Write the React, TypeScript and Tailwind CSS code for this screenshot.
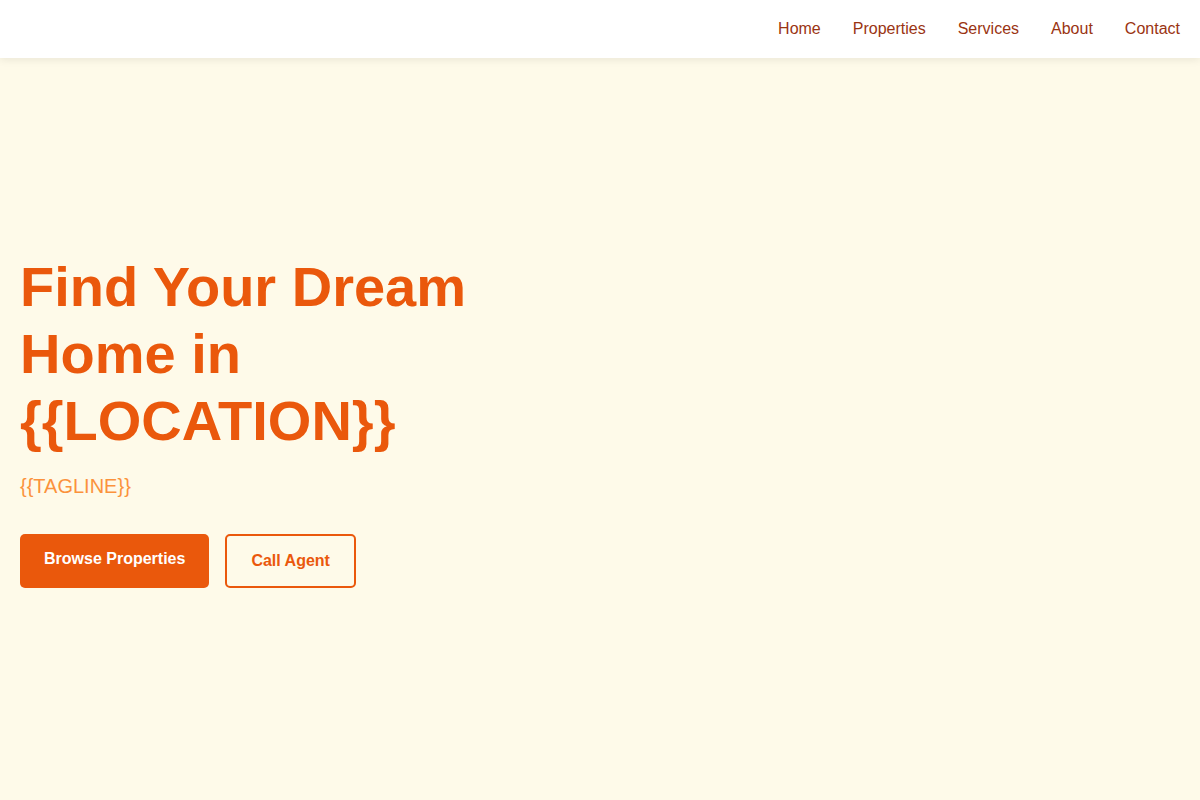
const NAV = ['Home', 'Properties', 'Services', 'About', 'Contact'];

export default function App() {
  return (
    <div className="min-h-screen flex flex-col bg-[#fefae9] font-['Liberation_Sans',Arial,sans-serif]">
      {/* Header */}
      <header className="h-[58px] bg-white flex items-center justify-end px-5 shadow-[0_2px_8px_rgba(0,0,0,0.08)] relative z-10">
        <nav className="flex items-center gap-8">
          {NAV.map(item => (
            <a key={item} href="#" className="text-base text-[#9a3412]">
              {item}
            </a>
          ))}
        </nav>
      </header>

      {/* Hero */}
      <section className="flex-1 px-5 pt-[195px]">
        <div className="max-w-xl">
          <h1 className="text-[56px] leading-[1.2] font-bold text-[#ea580c]">
            Find Your Dream Home in {'{{LOCATION}}'}
          </h1>
          <p className="mt-[17px] text-xl leading-7 text-[#fb923c]">{'{{TAGLINE}}'}</p>
          <div className="mt-[34px] flex items-start gap-4">
            <a
              href="#"
              className="h-[54px] px-6 pt-[13px] rounded-[5px] bg-[#ea580c] text-white text-base leading-6 font-bold"
            >
              Browse Properties
            </a>
            <a
              href="#"
              className="h-[54px] px-6 pt-[13px] rounded-[5px] border-2 border-[#ea580c] text-[#ea580c] text-base leading-6 font-bold"
            >
              Call Agent
            </a>
          </div>
        </div>
      </section>
    </div>
  );
}
